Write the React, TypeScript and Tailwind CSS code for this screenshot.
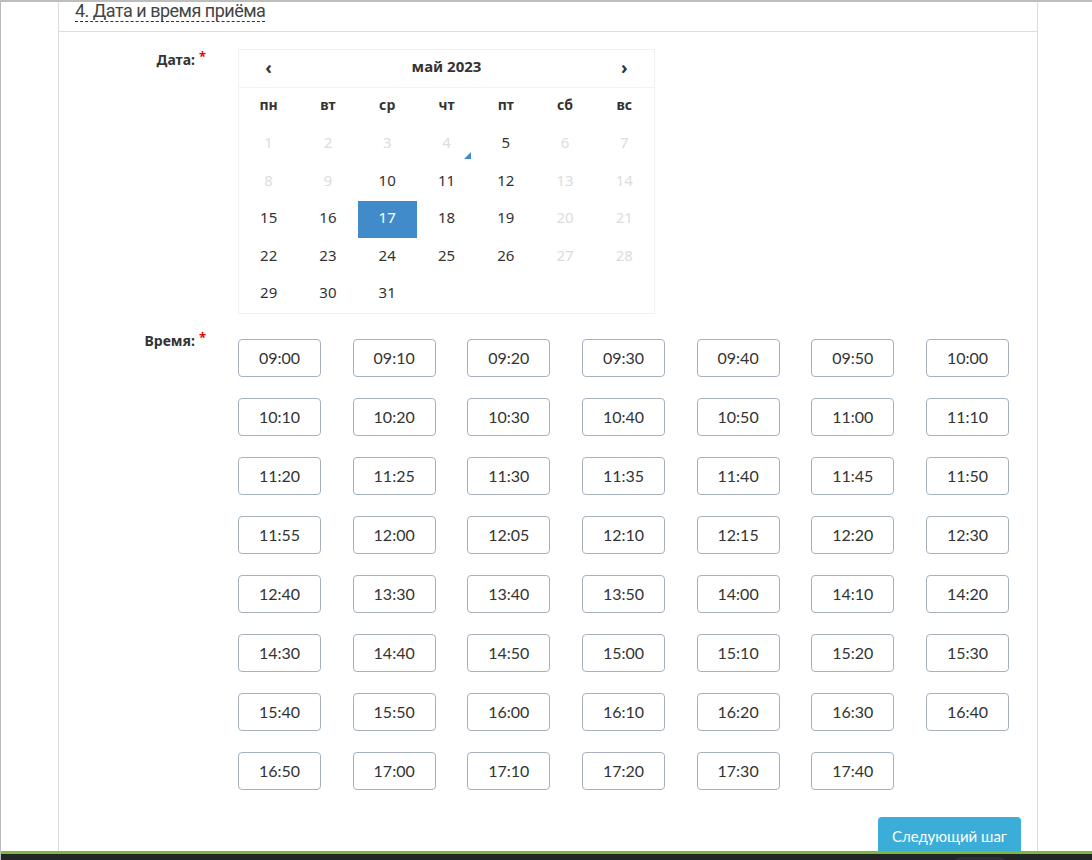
const weekDays = ['пн', 'вт', 'ср', 'чт', 'пт', 'сб', 'вс']

const activeDays = [5, 10, 11, 12, 15, 16, 17, 18, 19, 22, 23, 24, 25, 26, 29, 30, 31]

const times = [
  '09:00', '09:10', '09:20', '09:30', '09:40', '09:50', '10:00',
  '10:10', '10:20', '10:30', '10:40', '10:50', '11:00', '11:10',
  '11:20', '11:25', '11:30', '11:35', '11:40', '11:45', '11:50',
  '11:55', '12:00', '12:05', '12:10', '12:15', '12:20', '12:30',
  '12:40', '13:30', '13:40', '13:50', '14:00', '14:10', '14:20',
  '14:30', '14:40', '14:50', '15:00', '15:10', '15:20', '15:30',
  '15:40', '15:50', '16:00', '16:10', '16:20', '16:30', '16:40',
  '16:50', '17:00', '17:10', '17:20', '17:30', '17:40',
]

function Calendar() {
  const days = Array.from({ length: 31 }, (_, i) => i + 1)
  return (
    <div className="w-[417px] border border-[#f2f2f2] bg-white font-['Noto_Sans',sans-serif]">
      <div className="grid h-[38px] grid-cols-7 items-center border-b border-[#f2f2f2] pb-[4px] text-[15px] font-bold text-[#333]">
        <span className="text-center text-[18px] leading-none">‹</span>
        <span className="col-span-5 text-center">май 2023</span>
        <span className="text-center text-[18px] leading-none">›</span>
      </div>
      <div className="grid grid-cols-7 auto-rows-[37.5px] items-center">
        {weekDays.map(d => (
          <span key={d} className="pb-[4px] text-center text-[14px] font-bold text-[#333]">{d}</span>
        ))}
        {days.map(d => {
          const active = activeDays.includes(d)
          const selected = d === 17
          return (
            <div
              key={d}
              className={
                selected
                  ? 'relative flex h-full items-center justify-center bg-[#428bca] pb-[4px] text-[15px] text-white'
                  : active
                    ? 'relative flex h-full items-center justify-center pb-[4px] text-[15px] text-[#333]'
                    : 'relative flex h-full items-center justify-center pb-[4px] text-[15px] text-[#dcdcdc]'
              }
            >
              {d}
              {d === 4 && (
                <span className="absolute bottom-[4px] right-[5px] h-0 w-0 border-b-[7px] border-l-[7px] border-b-[#428bca] border-l-transparent" />
              )}
            </div>
          )
        })}
      </div>
    </div>
  )
}

function Label({ text }: { text: string }) {
  return (
    <div className="w-[179px] shrink-0 pr-[32px] text-right font-['Noto_Sans',sans-serif] text-[14px] font-bold leading-[20px] text-[#333]">
      {text}
      <span className="ml-[4px] align-top text-[13px] leading-[13px] text-[#e00]">*</span>
    </div>
  )
}

export default function App() {
  return (
    <div className="relative h-[860px] overflow-hidden border-t-2 border-l border-t-[#bdbdbd] border-l-[#bbb] bg-white font-['Lato','Noto_Sans',sans-serif]">
      <div className="ml-[57px] h-[849px] w-[980px] border-x border-[#ddd]">
        <div className="h-[30px] border-b border-[#ddd] pl-[16px] font-['Roboto',sans-serif] text-[18px] leading-[17px]">
          <span className="border-b border-dashed border-[#333] tracking-[-0.5px] text-[#444]">
            4. Дата и время приёма
          </span>
        </div>

        <div className="mt-[17px] flex">
          <div className="pt-[1px]"><Label text="Дата:" /></div>
          <Calendar />
        </div>

        <div className="mt-[17px] flex">
          <Label text="Время:" />
          <div className="mt-[8px] grid w-[771px] grid-cols-[repeat(7,83px)] justify-between gap-y-[21px]">
            {times.map(t => (
              <button
                key={t}
                className="flex h-[38px] items-center justify-center rounded-[4px] border border-[#a7b1bd] bg-white text-[16px] text-[#333]"
              >
                {t}
              </button>
            ))}
          </div>
        </div>

        <div className="mt-[27px] flex justify-end pr-[16px]">
          <button className="h-[38px] w-[143px] rounded-[4px] bg-[#3badd9] text-[15px] text-white">
            Следующий шаг
          </button>
        </div>
      </div>

      <div className="absolute bottom-0 left-0 h-[9px] w-full border-t-[3px] border-t-[#7cb83a] bg-[#222428]">
        <div className="ml-[955px] mt-[3px] h-[6px] w-[48px] rounded-t-[3px] bg-[#2e3034]" />
      </div>
    </div>
  )
}
